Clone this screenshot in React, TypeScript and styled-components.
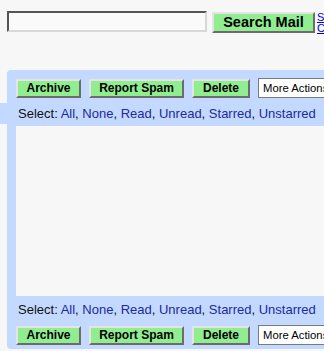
import React from "react";
import styled, { createGlobalStyle } from "styled-components";

const Global = createGlobalStyle`
  html, body {
    margin: 0;
    padding: 0;
    background: #f7f7f7;
    overflow: hidden;
    font-family: "Liberation Sans", Arial, sans-serif;
  }
`;

const Page = styled.div`
  width: 720px;
  padding-top: 11px;
`;

const SearchRow = styled.div`
  display: flex;
  align-items: flex-start;
  padding-left: 7px;
`;

const SearchInput = styled.input`
  box-sizing: border-box;
  width: 200px;
  height: 21px;
  margin: 0;
  padding: 0 3px;
  background: #fafafa;
  border-style: solid;
  border-width: 2px;
  border-color: #555 #d8d8d8 #d8d8d8 #555;
  font: 13px "Liberation Sans", Arial, sans-serif;
`;

const GreenButton = styled.button<{ $w: number; $h: number; $size: number }>`
  box-sizing: border-box;
  width: ${(p) => p.$w}px;
  height: ${(p) => p.$h}px;
  margin: 0;
  padding: 0;
  background: #90ee90;
  border-style: solid;
  border-width: 2px;
  border-color: #e4e4e4 #6c6c6c #6c6c6c #e4e4e4;
  color: #000;
  font-family: "Liberation Sans", Arial, sans-serif;
  font-weight: bold;
  font-size: ${(p) => p.$size}px;
  line-height: 1;
  white-space: nowrap;
  cursor: pointer;
`;

const SearchButton = styled(GreenButton)`
  margin-left: 5px;
  margin-top: 1px;
`;

const SideLinks = styled.div`
  display: flex;
  flex-direction: column;
  margin-left: 2px;
  margin-top: 1px;
  font-size: 11px;
  line-height: 11px;
  white-space: nowrap;
`;

const SmallLink = styled.a`
  color: #0000cc;
  text-decoration: underline;
`;

const Panel = styled.div`
  margin: 36px 0 0 7px;
  background: #c3d9ff;
  border-radius: 4px;
  padding: 8px 0 4px 9px;
`;

const ActionBar = styled.div<{ $top: number }>`
  display: flex;
  align-items: center;
  gap: 8px;
  height: 20px;
  margin-top: ${(p) => p.$top}px;
`;

const MoreSelect = styled.div`
  box-sizing: border-box;
  height: 20px;
  width: 130px;
  background: #fff;
  border: 1px solid #7a7a7a;
  padding-left: 4px;
  font-size: 11.3px;
  line-height: 18px;
  white-space: nowrap;
  color: #000;
`;

const SelectRow = styled.div<{ $ext: boolean; $top: number }>`
  height: 21px;
  line-height: 21px;
  margin-top: ${(p) => p.$top}px;
  margin-left: ${(p) => (p.$ext ? -16 : 0)}px;
  padding-left: ${(p) => (p.$ext ? 18 : 2)}px;
  background: #c3d9ff;
  font-size: 13px;
  color: #111;
  white-space: nowrap;
`;

const SelLink = styled.a`
  color: #1c2a9c;
  text-decoration: none;
`;

const ListArea = styled.div`
  margin-top: 2px;
  height: 170px;
  background: #f7f7f7;
`;

const Actions = ({ top }: { top: number }) => (
  <ActionBar $top={top}>
    <GreenButton $w={65} $h={19} $size={12}>Archive</GreenButton>
    <GreenButton $w={95} $h={19} $size={12}>Report Spam</GreenButton>
    <GreenButton $w={58} $h={19} $size={12}>Delete</GreenButton>
    <MoreSelect>More Actions ...</MoreSelect>
  </ActionBar>
);

const selectors = ["All", "None", "Read", "Unread", "Starred", "Unstarred"];

const Selector = ({ ext, top }: { ext: boolean; top: number }) => (
  <SelectRow $ext={ext} $top={top}>
    Select:{" "}
    {selectors.map((s, i) => (
      <React.Fragment key={s}>
        <SelLink href="#">{s}</SelLink>
        {i < selectors.length - 1 ? ", " : ""}
      </React.Fragment>
    ))}
  </SelectRow>
);

export default function App() {
  return (
    <Page>
      <Global />
      <SearchRow>
        <SearchInput type="text" />
        <SearchButton $w={103} $h={21} $size={14.5}>Search Mail</SearchButton>
        <SideLinks>
          <SmallLink href="#">Show search options</SmallLink>
          <SmallLink href="#">Create a filter</SmallLink>
        </SideLinks>
      </SearchRow>
      <Panel>
        <Actions top={0} />
        <Selector ext={true} top={5} />
        <ListArea />
        <Selector ext={false} top={3} />
        <Actions top={5} />
      </Panel>
    </Page>
  );
}
